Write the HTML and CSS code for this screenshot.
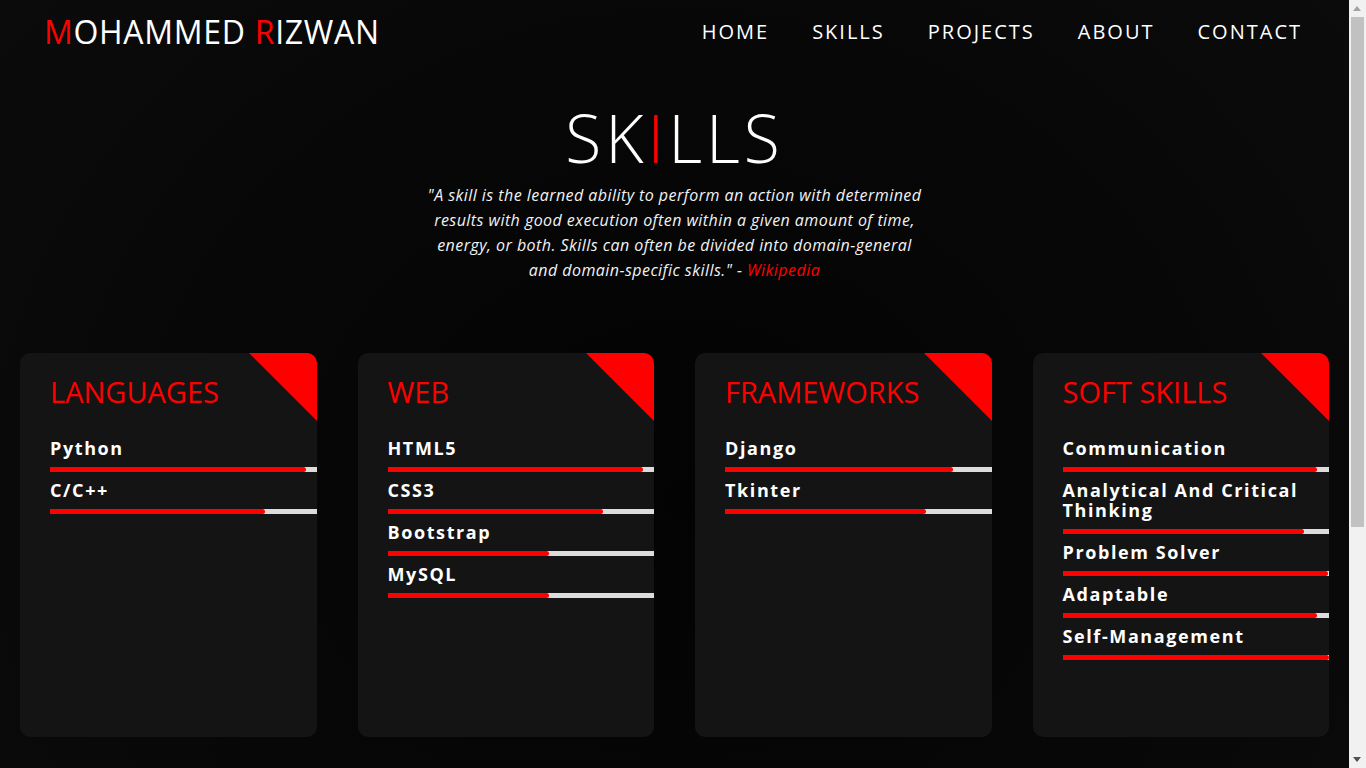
FILE: index.html
```html
<!DOCTYPE html>
<html lang="en">
<head>
<meta charset="utf-8">
<title>Mohammed Rizwan - Skills</title>
<link rel="stylesheet" href="styles.css">
</head>
<body>
<div class="page">
<header class="topbar">
  <a class="logo" href="#"><span class="red">M</span>OHAMMED <span class="red">R</span>IZWAN</a>
  <nav class="menu">
    <a href="#">HOME</a>
    <a href="#">SKILLS</a>
    <a href="#">PROJECTS</a>
    <a href="#">ABOUT</a>
    <a href="#">CONTACT</a>
  </nav>
</header>

<main class="skills">
  <h1 class="title">SK<span class="bar-i">I</span>LLS</h1>
  <p class="quote">"A skill is the learned ability to perform an action with determined<br>results with good execution often within a given amount of time,<br>energy, or both. Skills can often be divided into domain-general<br>and domain-specific skills." - <a href="#">Wikipedia</a></p>

  <div class="cards">
    <section class="card">
      <span class="corner"></span>
      <h2>LANGUAGES</h2>
      <div class="skill"><span class="name">Python</span><div class="track"><div class="fill" style="width:96%"></div></div></div>
      <div class="skill"><span class="name">C/C++</span><div class="track"><div class="fill" style="width:80.5%"></div></div></div>
    </section>
    <section class="card">
      <span class="corner"></span>
      <h2>WEB</h2>
      <div class="skill"><span class="name">HTML5</span><div class="track"><div class="fill" style="width:96%"></div></div></div>
      <div class="skill"><span class="name">CSS3</span><div class="track"><div class="fill" style="width:81%"></div></div></div>
      <div class="skill"><span class="name">Bootstrap</span><div class="track"><div class="fill" style="width:60.5%"></div></div></div>
      <div class="skill"><span class="name">MySQL</span><div class="track"><div class="fill" style="width:60.5%"></div></div></div>
    </section>
    <section class="card">
      <span class="corner"></span>
      <h2>FRAMEWORKS</h2>
      <div class="skill"><span class="name">Django</span><div class="track"><div class="fill" style="width:85.5%"></div></div></div>
      <div class="skill"><span class="name">Tkinter</span><div class="track"><div class="fill" style="width:75.5%"></div></div></div>
    </section>
    <section class="card">
      <span class="corner"></span>
      <h2>SOFT SKILLS</h2>
      <div class="skill"><span class="name">Communication</span><div class="track"><div class="fill" style="width:95.5%"></div></div></div>
      <div class="skill"><span class="name">Analytical And Critical Thinking</span><div class="track"><div class="fill" style="width:90.5%"></div></div></div>
      <div class="skill"><span class="name">Problem Solver</span><div class="track"><div class="fill" style="width:99.5%"></div></div></div>
      <div class="skill"><span class="name">Adaptable</span><div class="track"><div class="fill" style="width:95.5%"></div></div></div>
      <div class="skill"><span class="name">Self-Management</span><div class="track"><div class="fill" style="width:100%"></div></div></div>
    </section>
  </div>
</main>
</div>

<div class="scrollbar" aria-hidden="true">
  <span class="arrow up"></span>
  <span class="thumb"></span>
  <span class="arrow down"></span>
</div>
</body>
</html>
```

FILE: styles.css
```css
* { box-sizing: border-box; }

html, body {
  margin: 0;
  padding: 0;
}

body {
  background: radial-gradient(ellipse at 50% 45%, #030303 0%, #070707 50%, #0c0c0c 100%);
  background-color: #080808;
  color: #fff;
  font-family: "Open Sans", "DejaVu Sans", sans-serif;
}

.page {
  margin-right: 17px;
  min-height: 1108px;
}

a { text-decoration: none; color: inherit; }

.red { color: #ff0000; }

.topbar {
  display: flex;
  justify-content: space-between;
  align-items: center;
  height: 62px;
  padding: 0 47px 0 44px;
}

.logo {
  font-size: 32px;
  font-weight: 500;
  letter-spacing: 0.7px;
  color: #fff;
}

.menu {
  display: flex;
  gap: 43px;
}

.menu a {
  font-size: 20px;
  letter-spacing: 2px;
  color: #fff;
}

.skills {
  display: flex;
  flex-direction: column;
  align-items: center;
  padding-top: 42px;
}

.title {
  margin: 0;
  font-size: 66px;
  font-weight: 300;
  line-height: 1;
  letter-spacing: 4px;
}

.bar-i { color: #ff0000; }

.quote {
  margin: 13px 0 0;
  max-width: 560px;
  text-align: center;
  font-style: italic;
  font-size: 16px;
  line-height: 25px;
  color: #f2f2f2;
  letter-spacing: 0.45px;
}

.quote a { color: #ff0000; }

.cards {
  align-self: stretch;
  display: grid;
  grid-template-columns: repeat(4, 1fr);
  gap: 41px;
  padding: 0 20px;
  margin-top: 70px;
}

.card {
  position: relative;
  height: 384px;
  background: #141414;
  border-radius: 10px;
  overflow: hidden;
  padding: 21px 0 0 30px;
}

.corner {
  position: absolute;
  top: 0;
  right: 0;
  width: 0;
  height: 0;
  border-top: 68px solid #ff0000;
  border-left: 68px solid transparent;
}

.card h2 {
  margin: 0 0 28px;
  font-size: 29px;
  font-weight: 500;
  color: #ff0000;
  line-height: 36px;
}

.skill {
  display: flex;
  flex-direction: column;
  margin-bottom: 8px;
}

.name {
  font-size: 18px;
  font-weight: 700;
  letter-spacing: 1.6px;
  line-height: 20px;
  color: #fff;
  padding-right: 20px;
}

.track {
  margin-top: 9px;
  height: 5px;
  background: #dcdcdc;
}

.fill {
  height: 100%;
  background: #ff0000;
  border-radius: 0 3px 3px 0;
}

/* drawn window scrollbar */
.scrollbar {
  position: fixed;
  top: 0;
  right: 0;
  width: 17px;
  height: 100vh;
  background: #f1f1f1;
}

.thumb {
  position: absolute;
  top: 17px;
  left: 2px;
  width: 13px;
  height: 510px;
  background: #c1c1c1;
}

.arrow {
  position: absolute;
  left: 4px;
  width: 0;
  height: 0;
  border-left: 4.5px solid transparent;
  border-right: 4.5px solid transparent;
}

.arrow.up {
  top: 6px;
  border-bottom: 5px solid #a3a3a3;
}

.arrow.down {
  bottom: 6px;
  border-top: 5px solid #505050;
}
```
